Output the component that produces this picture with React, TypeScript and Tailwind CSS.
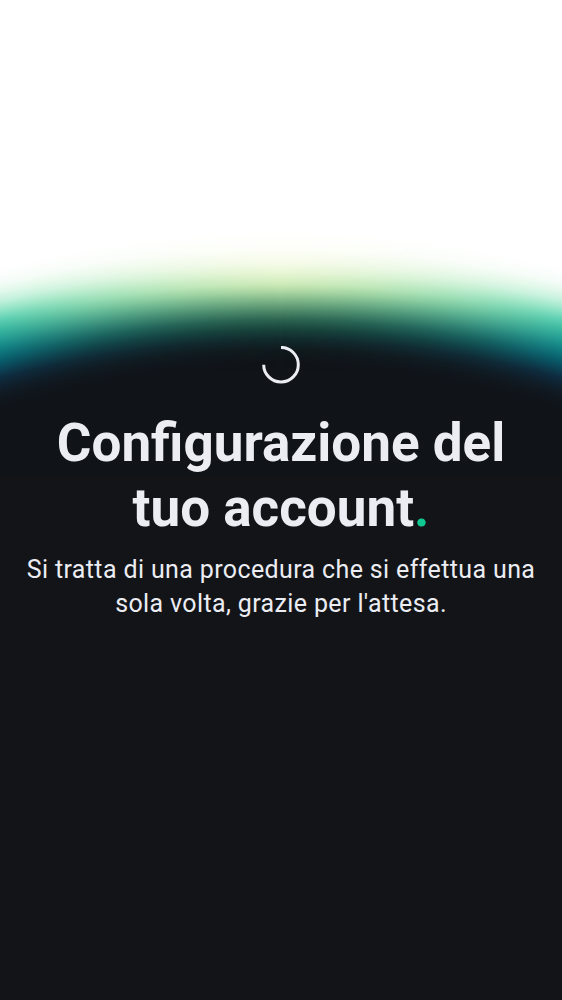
function Horizon() {
  return (
    <div aria-hidden="true" className="absolute inset-x-0 top-0 h-[476px] bg-[#101419]">
      <div className="absolute inset-0 bg-[radial-gradient(circle_at_50%_1400px,#101419_1038px,#101a1d_1050px,#12292c_1060px,#18423a_1070px,#2c6350_1080px,#538e6c_1090px,#82b88a_1100px,#acd6a2_1108px,#cfebba_1116px,#e8f6d5_1127px,#f6fbe9_1137px,#fdfef8_1150px,#ffffff_1168px)]" />
      <div className="absolute inset-0 bg-[radial-gradient(circle_at_50%_1400px,#10141900_1030px,#111820_1042px,#101f2c_1050px,#0e2c40_1060px,#0a4659_1069px,#086270_1078px,#118084_1088px,#249f95_1098px,#3bb8a1_1107px,#5ccfb2_1116px,#8fe3c6_1125px,#c0f0dc_1134px,#e0f8ea_1143px,#f5fcf8_1152px,#ffffff_1166px)] [mask-image:linear-gradient(to_right,black,rgba(0,0,0,0.74)_8%,rgba(0,0,0,0.5)_16%,rgba(0,0,0,0.3)_25%,rgba(0,0,0,0.16)_33%,rgba(0,0,0,0.05)_42%,transparent_50%,rgba(0,0,0,0.05)_58%,rgba(0,0,0,0.16)_67%,rgba(0,0,0,0.3)_75%,rgba(0,0,0,0.5)_84%,rgba(0,0,0,0.74)_92%,black)]" />
    </div>
  );
}

function Spinner() {
  return (
    <svg role="status" className="size-[38px]" viewBox="0 0 38 38" fill="none">
      <path d="M19 1.4A17.3 17.3 0 1 1 1.7 18.7" stroke="#ebedf3" strokeWidth="3" />
    </svg>
  );
}

export default function App() {
  return (
    <main className="relative flex h-[1000px] w-full flex-col items-center overflow-hidden bg-[#131418] pt-[346px] text-center font-['Roboto',sans-serif] text-[#ebedf3]">
      <Horizon />
      <div className="relative flex flex-col items-center">
        <Spinner />
        <h1 className="mt-[27px] text-[53px] leading-[64.5px] font-bold whitespace-nowrap">
          Configurazione del
          <br />
          tuo account<span className="text-[#10c891]">.</span>
        </h1>
        <p className="mt-[13px] text-[25px] leading-[34px] tracking-[0.37px] whitespace-nowrap">
          Si tratta di una procedura che si effettua una
          <br />
          sola volta, grazie per l'attesa.
        </p>
      </div>
    </main>
  );
}
